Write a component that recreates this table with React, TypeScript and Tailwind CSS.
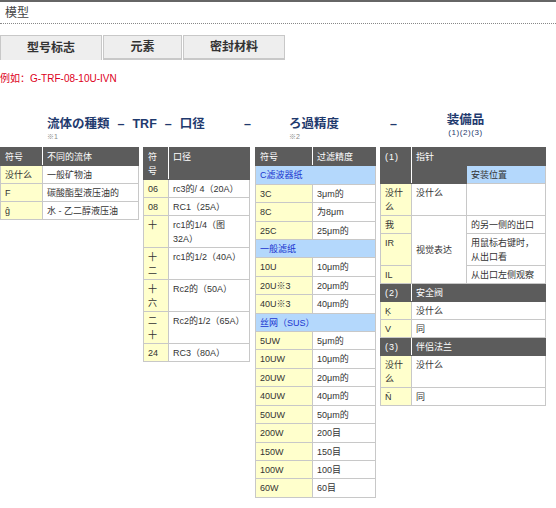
import React from 'react';

const base = 'border border-[#c8c8c8] px-[4px] pt-[2px] pb-[1px]';
const cell = `${base} align-top`;
const key = `${cell} bg-[#ffffcc]`;
const head =
  'border border-[#5c5c5c] bg-[#5c5c5c] px-[4px] pt-[2px] pb-[1px] text-left align-top font-normal text-white';
const sect = `${cell} bg-[#b4d8fc] text-[#1a35d0]`;

const fluids = [
  ['没什么', '一般矿物油'],
  ['F', '碳酸酯型液压油的'],
  ['ĝ', '水 - 乙二醇液压油'],
];

const ports = [
  ['06', 'rc3的/ 4（20A）'],
  ['08', 'RC1（25A）'],
  ['十', 'rc1的1/4（图 32A）'],
  ['十二', 'rc1的1/2（40A）'],
  ['十六', 'Rc2的（50A）'],
  ['二十', 'Rc2的1/2（65A）'],
  ['24', 'RC3（80A）'],
];

// section title + rows
const filters: [string, string[][]][] = [
  [
    'C滤波器纸',
    [
      ['3C', '3μm的'],
      ['8C', '为8μm'],
      ['25C', '25μm的'],
    ],
  ],
  [
    '一般滤纸',
    [
      ['10U', '10μm的'],
      ['20U※3', '20μm的'],
      ['40U※3', '40μm的'],
    ],
  ],
  [
    '丝网（SUS）',
    [
      ['5UW', '5μm的'],
      ['10UW', '10μm的'],
      ['20UW', '20μm的'],
      ['40UW', '40μm的'],
      ['50UW', '50μm的'],
      ['200W', '200目'],
      ['150W', '150目'],
      ['100W', '100目'],
      ['60W', '60目'],
    ],
  ],
];

export default function App() {
  return (
    <div className="min-h-[508px] w-[556px] bg-white font-['Liberation_Sans','Noto_Sans_CJK_SC',sans-serif] text-[#333]">
      <div className="h-[2px] bg-[#666]" />
      <div className="h-[22px] border-b border-dotted border-[#888] pl-[5px] text-[12px] leading-[22px] text-[#444]">
        模型
      </div>

      {/* tabs */}
      <div className="mt-[11px] flex h-[25px] text-[12px] font-bold text-[#333]">
        <div className="flex w-[102px] items-center justify-center border border-b-0 border-[#c8c8c8] bg-[#eee]">
          型号标志
        </div>
        <div className="ml-[1px] flex w-[79px] items-center justify-center border border-b-2 border-[#c8c8c8] bg-[#eee]">
          元素
        </div>
        <div className="ml-[1px] flex w-[102px] items-center justify-center border border-b-2 border-[#c8c8c8] bg-[#eee]">
          密封材料
        </div>
      </div>

      <div className="mt-[12px] text-[10px] leading-[14px] text-[#dd0022]">例如：G-TRF-08-10U-IVN</div>

      {/* headings */}
      <div className="mt-[26px] flex h-[35px] items-start font-['Liberation_Sans','Noto_Sans_CJK_JP',sans-serif] text-[#1f3a6e]">
        <div className="mt-[4px] w-[244px] pl-[47px]">
          <div className="flex gap-[8px] text-[12.5px] font-bold leading-[16px]">
            <span>流体の種類</span>
            <span>–</span>
            <span>TRF</span>
            <span>–</span>
            <span>口径</span>
          </div>
          <div className="text-[7px] leading-[9px] text-[#888]">※1</div>
        </div>
        <div className="mt-[4px] w-[45px] text-[12.5px] font-bold leading-[16px]">–</div>
        <div className="mt-[4px] w-[101px]">
          <div className="text-[12.5px] font-bold leading-[16px]">ろ過精度</div>
          <div className="text-[7px] leading-[9px] text-[#888]">※2</div>
        </div>
        <div className="mt-[4px] w-[57px] text-[12.5px] font-bold leading-[16px]">–</div>
        <div className="flex w-[37px] flex-col items-center whitespace-nowrap">
          <div className="text-[12.5px] font-bold leading-[16px]">装備品</div>
          <div className="text-[8px] leading-[9px] tracking-[0.6px]">(1)(2)(3)</div>
        </div>
      </div>

      {/* tables */}
      <div className="flex items-start gap-[4px] text-[9px] leading-[14px]">
        <table className="w-[139px] table-fixed">
          <colgroup>
            <col className="w-[42px]" />
            <col />
          </colgroup>
          <thead>
            <tr>
              <th className={`${head} border-r-white`}>符号</th>
              <th className={head}>不同的流体</th>
            </tr>
          </thead>
          <tbody>
            {fluids.map(([k, v]) => (
              <tr key={k}>
                <td className={key}>{k}</td>
                <td className={cell}>{v}</td>
              </tr>
            ))}
          </tbody>
        </table>

        <table className="w-[107px] table-fixed">
          <colgroup>
            <col className="w-[25px]" />
            <col />
          </colgroup>
          <thead>
            <tr>
              <th className={`${head} border-r-white`}>符号</th>
              <th className={head}>口径</th>
            </tr>
          </thead>
          <tbody>
            {ports.map(([k, v]) => (
              <tr key={k}>
                <td className={key}>{k}</td>
                <td className={cell}>{v}</td>
              </tr>
            ))}
          </tbody>
        </table>

        <table className="ml-[1px] w-[121px] table-fixed leading-[14.4px]">
          <colgroup>
            <col className="w-[57px]" />
            <col />
          </colgroup>
          <thead>
            <tr>
              <th className={`${head} border-r-white`}>符号</th>
              <th className={head}>过滤精度</th>
            </tr>
          </thead>
          <tbody>
            {filters.map(([title, rows]) => (
              <React.Fragment key={title}>
                <tr>
                  <td colSpan={2} className={sect}>
                    {title}
                  </td>
                </tr>
                {rows.map(([k, v]) => (
                  <tr key={k}>
                    <td className={key}>{k}</td>
                    <td className={cell}>{v}</td>
                  </tr>
                ))}
              </React.Fragment>
            ))}
          </tbody>
        </table>

        <table className="w-[166px] table-fixed">
          <colgroup>
            <col className="w-[31px]" />
            <col className="w-[55px]" />
            <col />
          </colgroup>
          <tbody>
            <tr>
              <th rowSpan={2} className={`${head} border-r-white text-center tracking-[1px]`}>
                (1)
              </th>
              <th colSpan={2} className={head}>
                指针
              </th>
            </tr>
            <tr>
              <th className={head}></th>
              <td className={`${cell} bg-[#b4d8fc]`}>安装位置</td>
            </tr>
            <tr>
              <td className={key}>没什么</td>
              <td className={cell}>没什么</td>
              <td className={cell}></td>
            </tr>
            <tr>
              <td className={key}>我</td>
              <td rowSpan={3} className={`${base} align-middle`}>
                视觉表达
              </td>
              <td className={cell}>的另一侧的出口</td>
            </tr>
            <tr>
              <td className={key}>IR</td>
              <td className={cell}>
                用鼠标右键时，
                <br />
                从出口看
              </td>
            </tr>
            <tr>
              <td className={key}>IL</td>
              <td className={cell}>从出口左侧观察</td>
            </tr>
            <tr>
              <th className={`${head} border-r-white text-center tracking-[1px]`}>(2)</th>
              <th colSpan={2} className={head}>
                安全阀
              </th>
            </tr>
            <tr>
              <td className={key}>Ķ</td>
              <td colSpan={2} className={cell}>
                没什么
              </td>
            </tr>
            <tr>
              <td className={key}>V</td>
              <td colSpan={2} className={cell}>
                同
              </td>
            </tr>
            <tr>
              <th className={`${head} border-r-white text-center tracking-[1px]`}>(3)</th>
              <th colSpan={2} className={head}>
                伴侣法兰
              </th>
            </tr>
            <tr>
              <td className={key}>没什么</td>
              <td colSpan={2} className={cell}>
                没什么
              </td>
            </tr>
            <tr>
              <td className={key}>Ñ</td>
              <td colSpan={2} className={cell}>
                同
              </td>
            </tr>
          </tbody>
        </table>
      </div>
    </div>
  );
}
